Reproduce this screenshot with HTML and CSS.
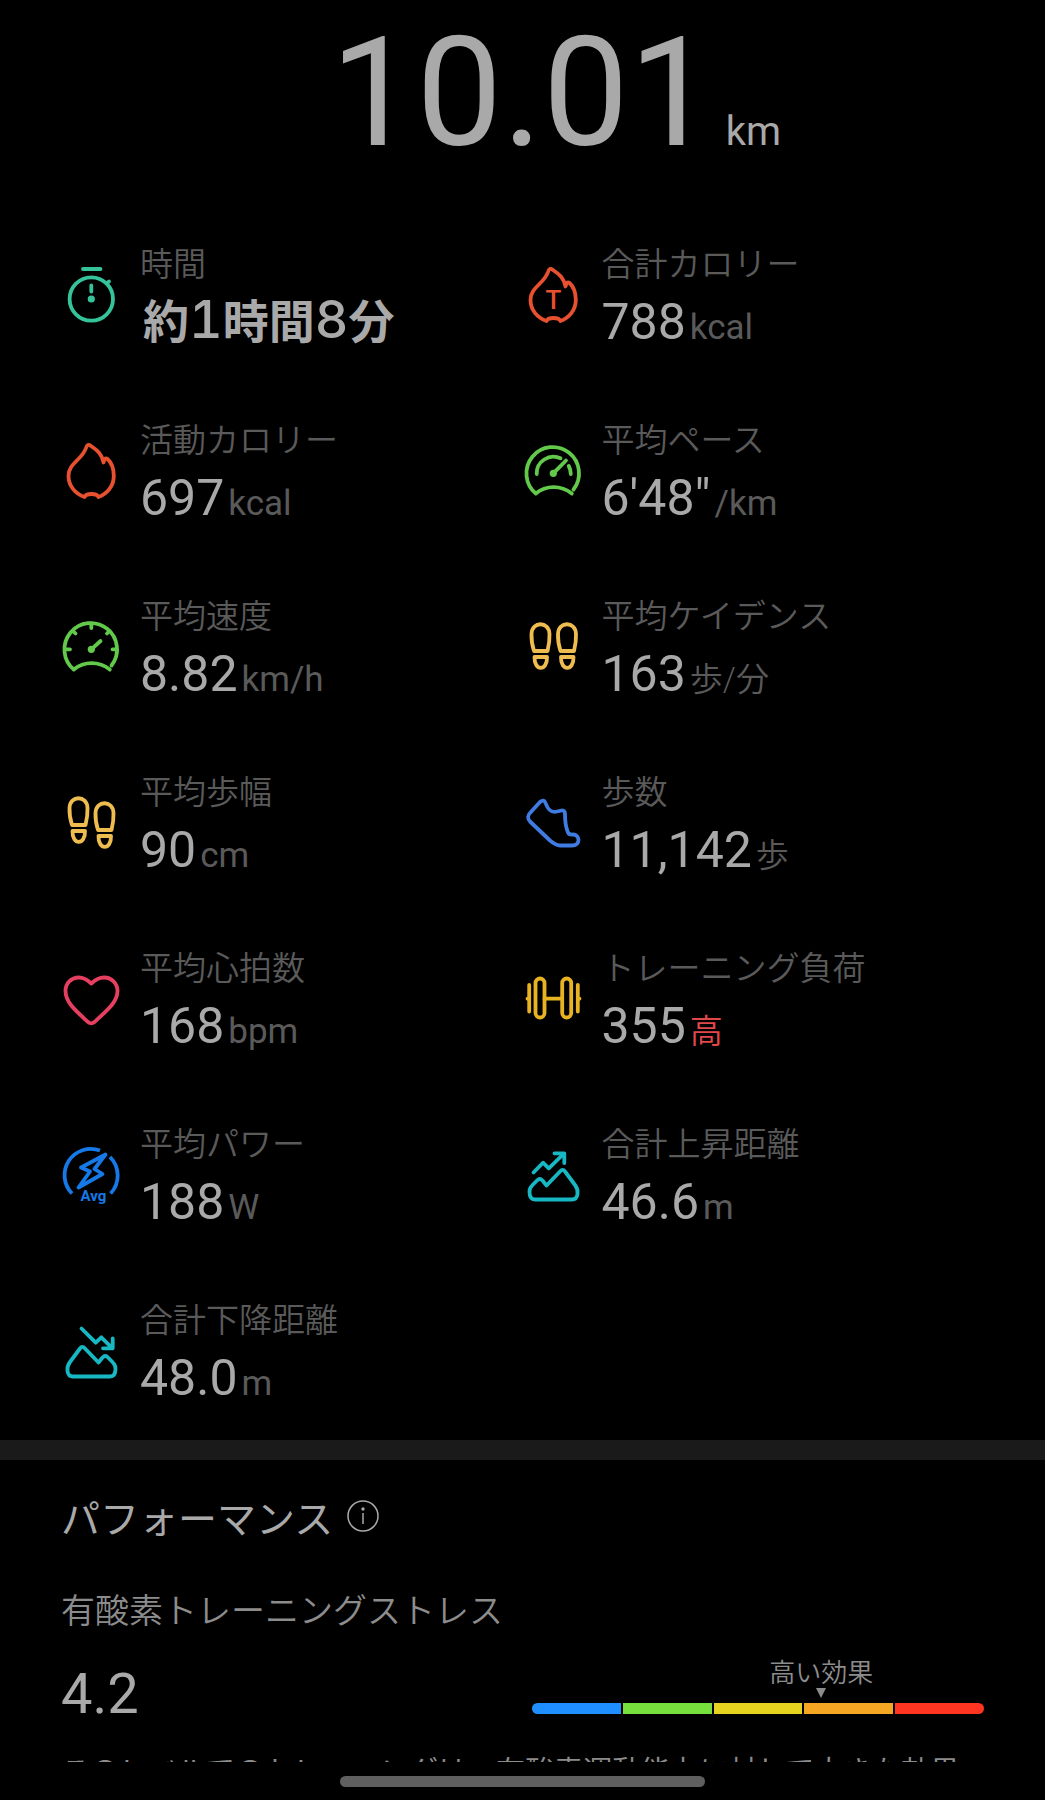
FILE: index.html
```html
<!DOCTYPE html>
<html lang="ja">
<head>
  <meta charset="UTF-8">
  <meta name="viewport" content="width=device-width, initial-scale=1.0">
  <title>ワークアウト</title>
  <link rel="stylesheet" href="styles.css">
</head>
<body>

<!-- shapes used by more than one icon -->
<svg class="defs" width="0" height="0">
  <symbol id="flame" viewBox="0 0 60 60">
    <path d="M25 5C26 1.5 27.500 1 30 3C36 7 41 11 42.500 19.500C43 17 44 14.500 46.500 16C51 20 52.800 26 52.800 33C52.800 43 46 51 37.500 54C36 50 25 50 23.500 54C14.500 51 7.500 43 7.500 33C7.500 20 21 17 25 5Z"/>
  </symbol>
  <symbol id="foot" viewBox="0 0 60 60">
    <path d="M11 32C8.500 24 8.300 20 8.500 15C9 2 26 2 26.500 15C26.700 20 26.500 24 24.500 32Z"/>
    <path d="M11.500 38H24C24.500 52.500 11 52.500 11.500 38Z"/>
  </symbol>
  <symbol id="gauge" viewBox="0 0 60 60">
    <path d="M50.500 46.500A26.300 26.300 0 1 0 12.800 50.500C23 42 38 42 48.800 50.500"/>
    <circle class="dot" cx="30.300" cy="30.300" r="3.600"/>
  </symbol>
  <symbol id="hill" viewBox="0 0 60 60">
    <path d="M6.500 45C6.500 41 7.500 40 14 33.500C16 31.500 17.500 31.500 19.500 33.500L23.500 38.500L37 24.500C39 22.300 40.500 22.300 42 24.500L52 38C55 42 55 44 54.500 47C54 51 52 52.500 49 52.500H12C8 52.500 6.500 50 6.500 45Z"/>
  </symbol>
</svg>

<div class="screen">
  <main class="content">
    <header class="distance">
      <h1 class="distance-value">10.01</h1>
      <span class="distance-unit">km</span>
    </header>

    <section class="stats">
      <div class="stat">
        <svg class="icon teal" viewBox="0 0 60 60">
          <circle cx="30.300" cy="32" r="21.700"/>
          <path d="M22 2H39.500M30.300 18.500V24.500M45.500 16.500L48 14.500"/>
          <circle class="dot" cx="30.300" cy="32" r="3.600"/>
        </svg>
        <div class="stat-text">
          <h2 class="label">時間</h2>
          <p class="value duration">約<span class="digit">1</span>時間<span class="digit">8</span>分</p>
        </div>
      </div>
      <div class="stat">
        <svg class="icon orange" viewBox="0 0 60 60">
          <use href="#flame"/>
          <text class="icon-t" x="30.500" y="42">T</text>
        </svg>
        <div class="stat-text">
          <h2 class="label">合計カロリー</h2>
          <p class="value">788<span class="unit">kcal</span></p>
        </div>
      </div>
      <div class="stat">
        <svg class="icon orange" viewBox="0 0 60 60"><use href="#flame"/></svg>
        <div class="stat-text">
          <h2 class="label">活動カロリー</h2>
          <p class="value">697<span class="unit">kcal</span></p>
        </div>
      </div>
      <div class="stat">
        <svg class="icon green" viewBox="0 0 60 60">
          <use href="#gauge"/>
          <path d="M13.700 31A16.700 16.700 0 0 1 37.500 15.300M45.800 23A16.700 16.700 0 0 1 47.800 31M30.300 30.300L43 17.500"/>
        </svg>
        <div class="stat-text">
          <h2 class="label">平均ペース</h2>
          <p class="value">6'48"<span class="unit">/km</span></p>
        </div>
      </div>
      <div class="stat">
        <svg class="icon green" viewBox="0 0 60 60">
          <use href="#gauge"/>
          <path d="M30.300 30.300L39.500 22M30.300 4.500V9M4.500 30.300H9M51.500 30.300H56M12 12L14.500 14.500M48.500 12L46 14.500"/>
        </svg>
        <div class="stat-text">
          <h2 class="label">平均速度</h2>
          <p class="value">8.82<span class="unit">km/h</span></p>
        </div>
      </div>
      <div class="stat">
        <svg class="icon sand" viewBox="0 0 60 60">
          <use href="#foot"/>
          <use href="#foot" x="26.500"/>
        </svg>
        <div class="stat-text">
          <h2 class="label">平均ケイデンス</h2>
          <p class="value">163<span class="unit kanji">歩/分</span></p>
        </div>
      </div>
      <div class="stat">
        <svg class="icon sand" viewBox="0 0 60 60">
          <use href="#foot" y="-2"/>
          <use href="#foot" x="26" y="3"/>
        </svg>
        <div class="stat-text">
          <h2 class="label">平均歩幅</h2>
          <p class="value">90<span class="unit">cm</span></p>
        </div>
      </div>
      <div class="stat">
        <svg class="icon blue" viewBox="0 0 60 60">
          <path d="M17 7C19.500 5 21.500 5 22.500 8C25 15 28 18 34 16.500L38.500 15.500C41 15 42 17 42 19C42 27 43 33 45 37.500C46 40 48 39.500 50 39.500C57 39.500 58 50.500 49 50.500H37C33 50.500 30 48 27 45.500L7 26.500C4.500 24 4.500 20.500 7 18Z"/>
        </svg>
        <div class="stat-text">
          <h2 class="label">歩数</h2>
          <p class="value">11,142<span class="unit kanji">歩</span></p>
        </div>
      </div>
      <div class="stat">
        <svg class="icon red" viewBox="0 0 60 60">
          <path d="M30.300 12.500C26 8.500 22 6.500 18 6.500C10 6.500 4.500 12.500 4.500 20C4.500 31 14 39 27 51C29.500 53 31 53 33.500 51C46.500 39 56.500 31 56.500 20C56.500 12.500 50.500 6.500 43 6.500C38.500 6.500 34.500 8.500 30.300 12.500Z"/>
        </svg>
        <div class="stat-text">
          <h2 class="label">平均心拍数</h2>
          <p class="value">168<span class="unit">bpm</span></p>
        </div>
      </div>
      <div class="stat">
        <svg class="icon yellow" viewBox="0 0 60 60">
          <rect x="12.500" y="7.500" width="9" height="39" rx="4.500"/>
          <rect x="39.200" y="7.500" width="9" height="39" rx="4.500"/>
          <path d="M21.500 27.700H39.200M6.200 14V40.500M54.800 14V40.500M4.500 27.700H6M55 27.700H56.500"/>
        </svg>
        <div class="stat-text">
          <h2 class="label">トレーニング負荷</h2>
          <p class="value">355<span class="unit kanji high">高</span></p>
        </div>
      </div>
      <div class="stat">
        <svg class="icon azure" viewBox="0 0 60 60">
          <path class="butt" d="M11 46.500A26.300 26.300 0 0 1 39 3.500M49 10A26.300 26.300 0 0 1 49.600 46.500"/>
          <path d="M44.500 7.500L20 20.500L29 24.500L17.500 40.500L41.500 27L33.500 22Z"/>
          <text class="icon-avg" x="32.500" y="54">Avg</text>
        </svg>
        <div class="stat-text">
          <h2 class="label">平均パワー</h2>
          <p class="value">188<span class="unit">W</span></p>
        </div>
      </div>
      <div class="stat">
        <svg class="icon cyan" viewBox="0 0 60 60">
          <use href="#hill"/>
          <path d="M10.500 25.500L20 15.700L25.800 21.300L41 6.500M31.500 6.300H41.300V16"/>
        </svg>
        <div class="stat-text">
          <h2 class="label">合計上昇距離</h2>
          <p class="value">46.6<span class="unit">m</span></p>
        </div>
      </div>
      <div class="stat">
        <svg class="icon cyan" viewBox="0 0 60 60">
          <use href="#hill" transform="matrix(-1 0 0 1 61 1)"/>
          <path d="M20.500 5.500L34.700 19.700L40.300 14.300L51.500 25.300M42 25.300H51.700V15.500"/>
        </svg>
        <div class="stat-text">
          <h2 class="label">合計下降距離</h2>
          <p class="value">48.0<span class="unit">m</span></p>
        </div>
      </div>
    </section>

    <section class="performance">
      <div class="performance-head">
        <h2 class="performance-title">パフォーマンス</h2>
        <button class="info-btn" type="button" aria-label="詳細">
          <svg class="info-icon" viewBox="0 0 32 32">
            <circle cx="16" cy="16" r="15"/>
            <path d="M16 13V24"/>
            <circle class="dot" cx="16" cy="9" r="1.700"/>
          </svg>
        </button>
      </div>
      <h3 class="stress-title">有酸素トレーニングストレス</h3>
      <div class="stress">
        <p class="stress-value">4.2</p>
        <div class="scale">
          <div class="marker" style="left: 64%">
            <span class="marker-text">高い効果</span>
            <span class="marker-arrow"></span>
          </div>
          <div class="bar">
            <span class="seg seg-1"></span>
            <span class="seg seg-2"></span>
            <span class="seg seg-3"></span>
            <span class="seg seg-4"></span>
            <span class="seg seg-5"></span>
          </div>
        </div>
      </div>
      <p class="note">このレベルでのトレーニングは、有酸素運動能力に対して大きな効果</p>
    </section>
  </main>

  <div class="home-bar"><span class="home-handle"></span></div>
</div>

</body>
</html>
```

FILE: styles.css
```css
* {
  box-sizing: border-box;
  margin: 0;
  padding: 0;
}
body {
  font-family: Roboto, 'Noto Sans CJK JP', sans-serif;
  background-color: #000;
  color: #a9a9a9;
}
h1, h2, h3 {
  font-weight: 400;
}
.defs {
  position: absolute;
}
.screen {
  display: flex;
  flex-direction: column;
  height: 100vh;
}
.content {
  flex: 1;
  min-height: 0;
  overflow: hidden;
}

/* distance */
.distance {
  display: grid;
  grid-template-columns: 1fr auto 1fr;
  align-items: baseline;
  height: 242px;
  padding-top: 3px;
}
.distance-value {
  grid-column: 2;
  font-size: 153px;
  line-height: 180px;
}
.distance-unit {
  padding-left: 11px;
  font-size: 40px;
}

/* stats */
.stats {
  display: grid;
  grid-template-columns: 1fr 1fr;
  row-gap: 64px;
  padding: 0 61px 30px;
  border-bottom: 20px solid #1a1a1a;
}
.stat {
  display: flex;
  align-items: center;
  gap: 19px;
}
.stat-text {
  display: flex;
  flex-direction: column;
  gap: 8px;
}
.label {
  font-family: 'Noto Sans CJK JP', sans-serif;
  font-size: 33px;
  font-weight: 350;
  line-height: 40px;
  color: #5a5a5a;
}
.value {
  font-size: 50px;
  line-height: 64px;
  white-space: nowrap;
}
.unit {
  margin-left: 4px;
  font-size: 35px;
  line-height: 1;
  color: #5a5a5a;
}
.unit.kanji {
  font-size: 33px;
  font-weight: 350;
}
.unit.high {
  color: #e0484c;
}
.duration {
  padding-left: 3px;
  font-size: 46px;
  font-weight: 600;
}
.digit {
  font-family: Inter, sans-serif;
  font-size: 52px;
  font-weight: 500;
  font-variant-numeric: tabular-nums;
  line-height: 1;
}

/* icons */
.icon {
  flex: none;
  width: 60px;
  height: 60px;
  margin-bottom: 2px;
  overflow: visible;
  fill: none;
  stroke: currentColor;
  stroke-width: 3.8;
  stroke-linecap: round;
  stroke-linejoin: round;
}
.dot {
  fill: currentColor;
  stroke: none;
}
.butt {
  stroke-linecap: butt;
}
.icon-t,
.icon-avg {
  fill: currentColor;
  stroke: none;
  text-anchor: middle;
}
.icon-t {
  font-size: 26px;
  font-weight: 500;
}
.icon-avg {
  font-size: 15px;
  font-weight: 700;
}
.teal { color: #35c39b; }
.orange { color: #e8512f; }
.green { color: #62c94b; }
.sand { color: #efbd4f; }
.blue { color: #3f7be0; }
.red { color: #e63f5f; }
.yellow { color: #e8b322; }
.azure { color: #1579e8; }
.cyan { color: #17b7c3; }

/* performance */
.performance {
  padding: 32px 61px 0;
}
.performance-head {
  display: flex;
  align-items: center;
  gap: 14px;
}
.performance-title {
  font-family: 'Noto Sans CJK JP', sans-serif;
  font-size: 39px;
  line-height: 48px;
}
.info-btn {
  width: 32px;
  height: 32px;
  border: none;
  background: none;
  color: #a9a9a9;
  cursor: pointer;
}
.info-icon {
  display: block;
  fill: none;
  stroke: currentColor;
  stroke-width: 1.5;
}
.stress-title {
  margin-top: 49px;
  font-family: 'Noto Sans CJK JP', sans-serif;
  font-size: 34px;
  font-weight: 350;
  line-height: 40px;
  color: #8c8c8c;
}
.stress {
  display: flex;
  gap: 19px;
  margin-top: 31px;
}
.stress-value {
  flex: 1;
  font-size: 56px;
  line-height: 68px;
}
.scale {
  position: relative;
  flex: 1;
  padding-top: 43px;
}
.marker {
  position: absolute;
  top: -6px;
  transform: translateX(-50%);
  display: flex;
  flex-direction: column;
  align-items: center;
}
.marker-text {
  font-family: 'Noto Sans CJK JP', sans-serif;
  font-size: 26px;
  font-weight: 350;
  line-height: 34px;
  white-space: nowrap;
  color: #8c8c8c;
}
.marker-arrow {
  border: 5px solid transparent;
  border-top: 10px solid #8c8c8c;
  border-bottom: none;
}
.bar {
  display: flex;
  gap: 2px;
  height: 11px;
  border-radius: 6px;
  overflow: hidden;
}
.seg {
  flex: 1;
}
.seg-1 { background-color: #1f8fff; }
.seg-2 { background-color: #77e03d; }
.seg-3 { background-color: #e6d31f; }
.seg-4 { background-color: #f5a623; }
.seg-5 { background-color: #ff3421; }
.note {
  margin-top: 24px;
  font-size: 29px;
  line-height: 40px;
  white-space: nowrap;
  color: #8c8c8c;
}

/* bottom gesture bar */
.home-bar {
  display: flex;
  justify-content: center;
  height: 38px;
  padding-top: 14px;
}
.home-handle {
  width: 35%;
  height: 11px;
  border-radius: 6px;
  background-color: #5f5f5f;
}
```
